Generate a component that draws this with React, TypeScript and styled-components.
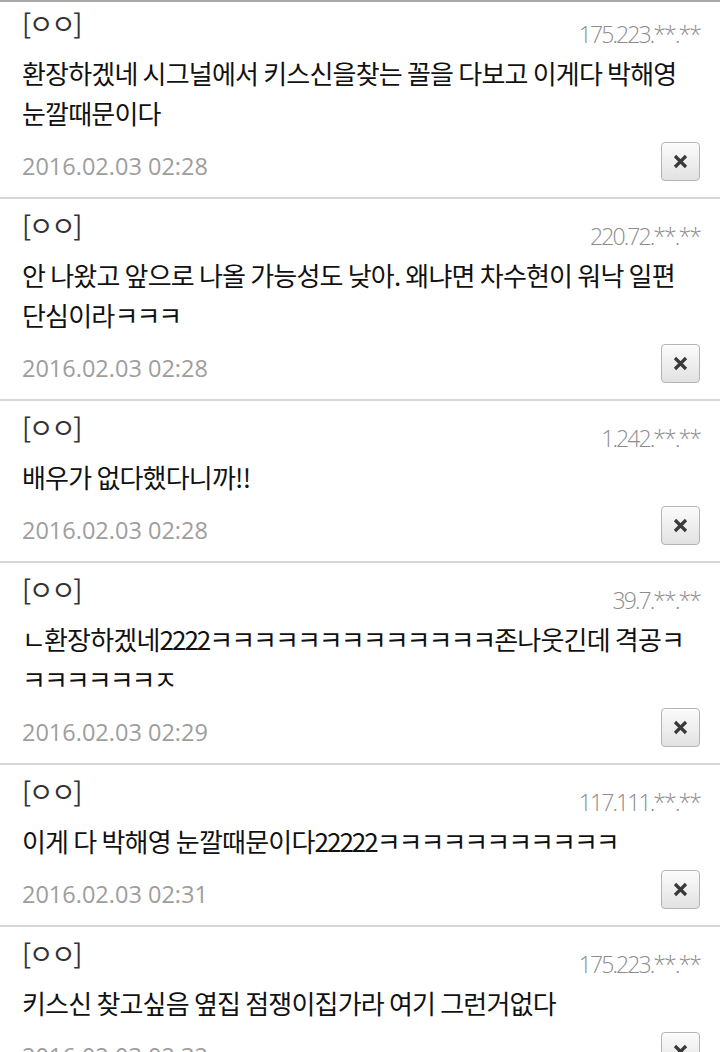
import React from 'react';
import styled, { createGlobalStyle } from 'styled-components';

const GlobalStyle = createGlobalStyle`
  html, body { margin: 0; padding: 0; background: #fff; }
  body {
    font-family: "Noto Sans", "Noto Sans CJK KR", sans-serif;
    overflow: hidden;
  }
`;

const List = styled.div`
  border-top: 2px solid #a8a8a8;
`;

const Item = styled.div<{ $first?: boolean }>`
  padding: ${({ $first }) => ($first ? '3px' : '8px')} 20px 14px 22px;
  border-bottom: 2px solid #d6d6d6;
`;

const Header = styled.div`
  display: flex;
  justify-content: space-between;
  align-items: flex-start;
  height: 48px;
`;

const Name = styled.span`
  font-size: 27px;
  line-height: 36px;
  color: #333;
  letter-spacing: -2.5px;
  font-family: "Noto Sans CJK KR", sans-serif;
`;

const Ip = styled.span`
  margin-top: 17px;
  font-size: 23px;
  line-height: 24px;
  color: #8c8c8c;
  letter-spacing: -1.9px;
  font-family: "Open Sans", "Noto Sans", sans-serif;
  font-weight: 300;
`;

const Body = styled.div`
  font-size: 26px;
  line-height: 40px;
  color: #111;
  font-family: "Noto Sans CJK KR", sans-serif;
  letter-spacing: -0.8px;
  white-space: nowrap;
`;

// jamo runs and digit runs are set tighter than syllables in the original
const Tight = styled.span<{ $spacing: number }>`
  letter-spacing: ${({ $spacing }) => $spacing}px;
`;

const Footer = styled.div`
  display: flex;
  justify-content: space-between;
  align-items: center;
  margin-top: 6px;
  height: 44px;
`;

const Date = styled.span`
  padding-top: 10px;
  font-size: 23.5px;
  color: #9e9e9e;
  font-family: "Open Sans", "Noto Sans", sans-serif;
`;

const DeleteButton = styled.button`
  width: 39px;
  height: 39px;
  padding: 0;
  display: flex;
  align-items: center;
  justify-content: center;
  border: 1px solid #b4b4b4;
  border-radius: 4px;
  background: linear-gradient(#fbfbfb, #e2e2e2);
  box-shadow: inset 0 1px 0 #fff;
`;

const comments = [
  { ip: '175.223.**.**', date: '2016.02.03 02:28', lines: ['환장하겠네 시그널에서 키스신을찾는 꼴을 다보고 이게다 박해영', '눈깔때문이다'] },
  { ip: '220.72.**.**', date: '2016.02.03 02:28', lines: ['안 나왔고 앞으로 나올 가능성도 낮아. 왜냐면 차수현이 워낙 일편', '단심이라ㅋㅋㅋ'] },
  { ip: '1.242.**.**', date: '2016.02.03 02:28', lines: ['배우가 없다했다니까!!'] },
  { ip: '39.7.**.**', date: '2016.02.03 02:29', lines: ['ㄴ환장하겠네2222ㅋㅋㅋㅋㅋㅋㅋㅋㅋㅋㅋㅋㅋ존나웃긴데 격공ㅋ', 'ㅋㅋㅋㅋㅋㅋㅈ'] },
  { ip: '117.111.**.**', date: '2016.02.03 02:31', lines: ['이게 다 박해영 눈깔때문이다22222ㅋㅋㅋㅋㅋㅋㅋㅋㅋㅋㅋ'] },
  { ip: '175.223.**.**', date: '2016.02.03 02:32', lines: ['키스신 찾고싶음 옆집 점쟁이집가라 여기 그런거없다'] },
];

const renderLine = (line: string) =>
  line.split(/([ㄱ-ㅣ]+|\d+)/).filter(Boolean).map((seg, k) => {
    if (/^[ㄱ-ㅣ]+$/.test(seg)) return <Tight key={k} $spacing={-2}>{seg}</Tight>;
    if (/^\d+$/.test(seg)) return <Tight key={k} $spacing={-2}>{seg}</Tight>;
    return <React.Fragment key={k}>{seg}</React.Fragment>;
  });

const CloseIcon = () => (
  <svg width="15" height="15" viewBox="0 0 15 15">
    <path d="M2 2 L13 13 M13 2 L2 13" stroke="#3a3a3a" strokeWidth="3.2" strokeLinecap="butt" />
  </svg>
);

export default function App() {
  return (
    <>
      <GlobalStyle />
      <List>
        {comments.map((c, i) => (
          <Item key={i} $first={i === 0}>
            <Header>
              <Name>[ㅇㅇ]</Name>
              <Ip>{c.ip}</Ip>
            </Header>
            <Body>
              {c.lines.map((l, j) => <div key={j}>{renderLine(l)}</div>)}
            </Body>
            <Footer>
              <Date>{c.date}</Date>
              <DeleteButton><CloseIcon /></DeleteButton>
            </Footer>
          </Item>
        ))}
      </List>
    </>
  );
}
